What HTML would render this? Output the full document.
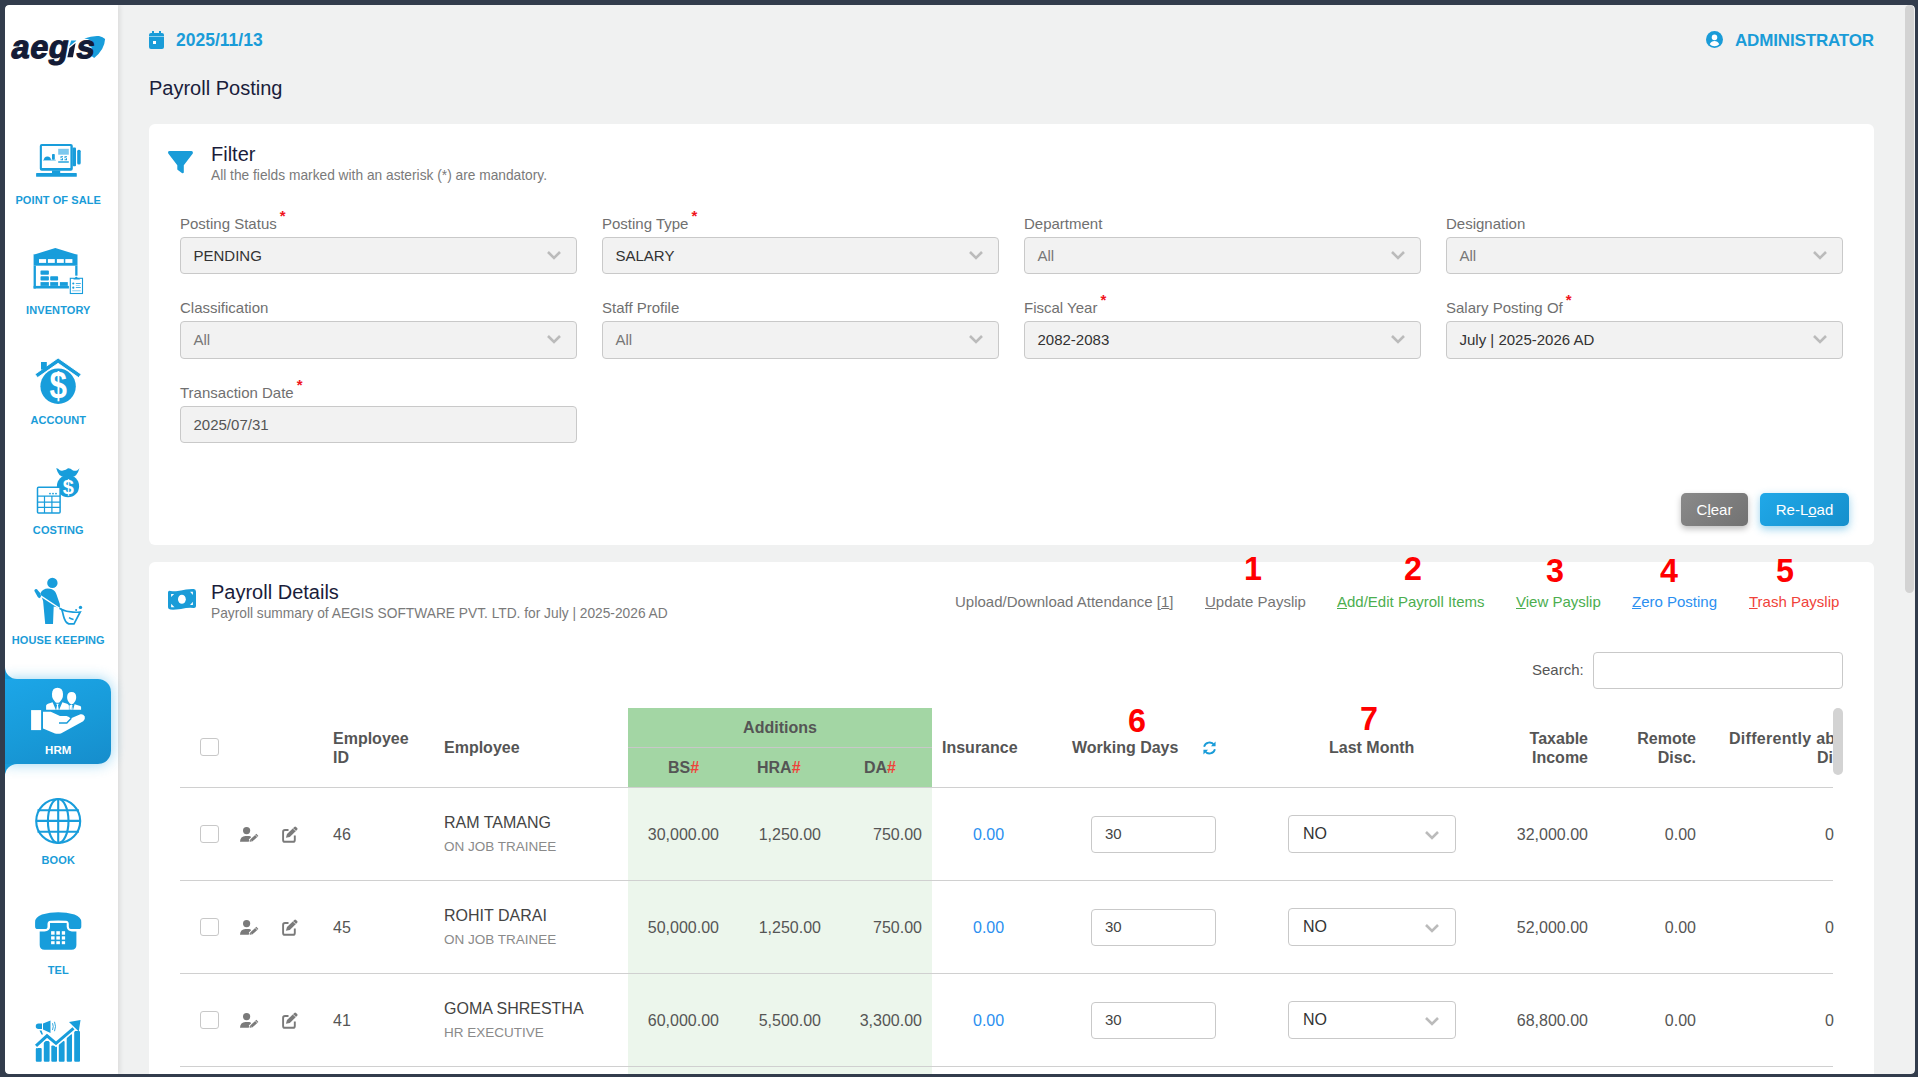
<!DOCTYPE html>
<html><head><meta charset="utf-8">
<style>
*{box-sizing:border-box;margin:0;padding:0}
html,body{width:1918px;height:1077px;overflow:hidden;background:#323c4c;font-family:"Liberation Sans",sans-serif}
#frame{position:absolute;left:5px;top:5px;width:1910px;height:1069px;background:#f0f1f1;border-radius:4px}
#side{position:absolute;left:5px;top:5px;width:113px;height:1069px;background:#fff;border-radius:4px 0 0 4px;box-shadow:2px 0 5px rgba(0,0,0,.09)}
.abs{position:absolute}
.blue{color:#1a9cd8}
.slbl{position:absolute;left:5px;width:106.5px;text-align:center;font-size:11px;font-weight:bold;color:#1a9cd8;letter-spacing:.1px}
.card{position:absolute;left:149px;width:1725px;background:#fff;border-radius:6px}
.lbl{position:absolute;font-size:15px;color:#707070;margin-top:1px}
.req{color:#f0141c;font-size:15px;font-weight:bold;position:relative;top:-8px;left:3px}
.sel{position:absolute;width:397px;height:37px;background:#f2f2f2;border:1px solid #c9c9c9;border-radius:4px;font-size:15px;color:#333;padding-left:12.5px;line-height:35px}
.sel.g{color:#777}
.chev{position:absolute;right:14px;top:12px;width:16px;height:10px}
.num{position:absolute;font-size:34px;font-weight:bold;color:#f00;line-height:1;transform:scaleX(.95);transform-origin:0 0}
.act{position:absolute;font-size:15px;top:593px}
.th{position:absolute;font-size:16px;font-weight:bold;color:#555;line-height:19px}
.td{position:absolute;font-size:16px;color:#555}
.hl{position:absolute;left:180px;width:1653px;height:1px;background:#d0d0d0}
.cb{position:absolute;left:200px;width:18.5px;height:18px;border:1px solid #c8c8c8;border-radius:3px;background:#fff}
.inp{position:absolute;left:1086px;width:125px;height:37px;border:1px solid #c9c9c9;border-radius:4px;background:#fff;font-size:15px;color:#444;padding-left:13px;line-height:33px}
.nos{position:absolute;left:1283px;width:168px;height:38px;border:1px solid #c9c9c9;border-radius:4px;background:#fff;font-size:16px;color:#333;padding-left:14px;line-height:36px}
</style></head><body>
<div id="frame"></div>
  <div id="side"></div>
  <div class="abs" style="left:5px;top:660px;width:20px;height:125px;background:#189ddb"></div>
  <div class="abs" style="left:5px;top:560px;width:113px;height:119px;background:#fff;border-bottom-left-radius:12px"></div>
  <div class="abs" style="left:5px;top:764px;width:113px;height:60px;background:#fff;border-top-left-radius:12px"></div>
  <div class="abs" style="left:5px;top:679px;width:106px;height:85px;background:linear-gradient(160deg,#1ca6e8 0%,#189ad8 55%,#168dcc 100%);border-radius:0 13px 13px 0;box-shadow:0 0 14px rgba(26,160,225,.45)"></div>
  <!-- header -->
  <svg class="abs" style="left:149px;top:31px" width="15" height="18" viewBox="0 0 15 18"><rect x="3" y="0" width="2" height="4" fill="#1a9cd8"/><rect x="10" y="0" width="2" height="4" fill="#1a9cd8"/><rect x="0" y="2" width="15" height="16" rx="2" fill="#1a9cd8"/><rect x="0" y="5" width="15" height="1" fill="#8fd0ee"/><rect x="4" y="10" width="3" height="3" fill="#fff"/></svg>
  <div class="abs blue" style="left:176px;top:30px;font-size:17.5px;font-weight:bold">2025/11/13</div>
  <div class="abs" style="left:149px;top:77px;font-size:20px;color:#1a1d3b">Payroll Posting</div>
  <svg class="abs" style="left:1706px;top:31px" width="17" height="17" viewBox="0 0 16 16"><circle cx="8" cy="8" r="8" fill="#1a9cd8"/><circle cx="8" cy="6" r="2.6" fill="#fff"/><path d="M3.5 12.5c1-2 2.6-3 4.5-3s3.5 1 4.5 3A6.2 6.2 0 0 1 8 14.3a6.2 6.2 0 0 1-4.5-1.8z" fill="#fff"/></svg>
  <div class="abs blue" style="left:1735px;top:31px;font-size:17px;font-weight:bold;letter-spacing:-0.16px">ADMINISTRATOR</div>

  <!-- filter card -->
  <div class="card" style="top:124px;height:421px"></div>
  <div class="card" style="top:562px;height:520px"></div>

  <!-- filter content -->
  <svg class="abs" style="left:167px;top:151px" width="27" height="23" viewBox="-1 0 27 23"><path d="M1.5 0H23.5Q25.6 0.4 24.8 2.4L15.8 14.3V21.4Q15.6 22.3 14.2 22.2L9.5 18.8Q9.2 18.5 9.3 17.8V14.3L0.3 2.4Q-0.6 0.4 1.5 0z" fill="#1a9cd8"/></svg>
  <div class="abs" style="left:211px;top:143px;font-size:20px;color:#1a1d3b">Filter</div>
  <div class="abs" style="left:211px;top:168px;font-size:13.75px;color:#7a7a7a">All the fields marked with an asterisk (*) are mandatory.</div>
  <div class="lbl" style="left:180px;top:214px">Posting Status<span class="req">*</span></div>
  <div class="sel" style="left:180px;top:237px">PENDING<svg class="chev" viewBox="0 0 16 10"><path d="M2 2l6 6 6-6" fill="none" stroke="#bbbbbb" stroke-width="2.6"/></svg></div>
  <div class="lbl" style="left:602px;top:214px">Posting Type<span class="req">*</span></div>
  <div class="sel" style="left:602px;top:237px">SALARY<svg class="chev" viewBox="0 0 16 10"><path d="M2 2l6 6 6-6" fill="none" stroke="#bbbbbb" stroke-width="2.6"/></svg></div>
  <div class="lbl" style="left:1024px;top:214px">Department</div>
  <div class="sel g" style="left:1024px;top:237px">All<svg class="chev" viewBox="0 0 16 10"><path d="M2 2l6 6 6-6" fill="none" stroke="#bbbbbb" stroke-width="2.6"/></svg></div>
  <div class="lbl" style="left:1446px;top:214px">Designation</div>
  <div class="sel g" style="left:1446px;top:237px">All<svg class="chev" viewBox="0 0 16 10"><path d="M2 2l6 6 6-6" fill="none" stroke="#bbbbbb" stroke-width="2.6"/></svg></div>
  <div class="lbl" style="left:180px;top:298px">Classification</div>
  <div class="sel g" style="left:180px;top:321px;height:38px;line-height:36px">All<svg class="chev" viewBox="0 0 16 10"><path d="M2 2l6 6 6-6" fill="none" stroke="#bbbbbb" stroke-width="2.6"/></svg></div>
  <div class="lbl" style="left:602px;top:298px">Staff Profile</div>
  <div class="sel g" style="left:602px;top:321px;height:38px;line-height:36px">All<svg class="chev" viewBox="0 0 16 10"><path d="M2 2l6 6 6-6" fill="none" stroke="#bbbbbb" stroke-width="2.6"/></svg></div>
  <div class="lbl" style="left:1024px;top:298px">Fiscal Year<span class="req">*</span></div>
  <div class="sel" style="left:1024px;top:321px;height:38px;line-height:36px">2082-2083<svg class="chev" viewBox="0 0 16 10"><path d="M2 2l6 6 6-6" fill="none" stroke="#bbbbbb" stroke-width="2.6"/></svg></div>
  <div class="lbl" style="left:1446px;top:298px">Salary Posting Of<span class="req">*</span></div>
  <div class="sel" style="left:1446px;top:321px;height:38px;line-height:36px">July | 2025-2026 AD<svg class="chev" viewBox="0 0 16 10"><path d="M2 2l6 6 6-6" fill="none" stroke="#bbbbbb" stroke-width="2.6"/></svg></div>
  <div class="lbl" style="left:180px;top:383px">Transaction Date<span class="req">*</span></div>
  <div class="sel" style="left:180px;top:406px;color:#555">2025/07/31</div>
  <div class="abs" style="left:1681px;top:493px;width:67px;height:33px;border-radius:5px;background:linear-gradient(135deg,#8a8a8a,#727272);color:#fff;font-size:15px;text-align:center;line-height:33px;box-shadow:0 3px 6px rgba(0,0,0,.25)">C<u>l</u>ear</div>
  <div class="abs" style="left:1760px;top:493px;width:89px;height:33px;border-radius:5px;background:linear-gradient(135deg,#20a8e8,#158fcc);color:#fff;font-size:15px;text-align:center;line-height:33px;box-shadow:0 3px 8px rgba(26,156,216,.45)">Re-L<u>o</u>ad</div>

  <!-- sidebar -->
  <svg class="abs" style="left:5px;top:25px" width="110" height="45" viewBox="5 25 110 45">
    <path d="M84.3 38.5Q92 35.5 99 36Q103 36.8 105.1 39.1Q104.5 50 94.2 57.9L90.9 55.4Q92.5 51 91.8 47.5L90 47Q92.5 45 92.4 42Q91 39.5 84.3 38.5z" fill="#189ddb"/>
    <g transform="translate(10 58) skewX(-10)" fill="#131b36" stroke="#131b36" stroke-width="1.2" font-family="Liberation Sans" font-weight="bold" font-size="32.5">
      <text x="0" y="0" letter-spacing="0.6">aeg</text>
    </g>
    <g transform="translate(10 58) skewX(-10)" fill="#131b36" stroke="#fff" stroke-width="0.8" font-family="Liberation Sans" font-weight="bold" font-size="32.5">
      <text x="65" y="0" stroke="#131b36" stroke-width="1.2">s</text>
    </g>
    <path d="M69.5 48.1L75.6 43L72.9 57.3H67.3z" fill="#131b36"/>
    <path d="M71.2 40.4H76.3L76 41L69.2 46.5z" fill="#189ddb"/>
  </svg>
  <svg class="abs" style="left:30px;top:138px" width="60" height="44" viewBox="0 0 60 44" fill="#189ddb">
    <path fill-rule="evenodd" d="M11.8 5.9h29a2 2 0 0 1 2 2v22.8a2 2 0 0 1-2 2h-29a2 2 0 0 1-2-2V7.9a2 2 0 0 1 2-2zM11.9 8v22.1h28.5V8z"/>
    <rect x="22" y="32.5" width="8.2" height="3"/>
    <rect x="6.1" y="35.1" width="40.7" height="3.7" rx="0.6"/>
    <rect x="42.6" y="9.4" width="3.4" height="18.8" rx="1"/>
    <rect x="47.2" y="11.8" width="3.5" height="14.7" rx="1.5"/>
    <path d="M13.9 22a3.5 3.5 0 0 1 7 0z"/><rect x="13" y="21.8" width="12.8" height="0.6"/>
    <rect x="22" y="16" width="2.8" height="5.7" rx=".8"/>
    <rect x="28.2" y="10.8" width="10.6" height="5.9" fill="#7cc8ee"/>
    <path d="M30.5 18.2h2.5v1h-1.5v1h1.5v2h-2.5v-1h1.5v-1h-1.5zM34.5 18.2h2.5v1h-1.5v1h1.5v2h-2.5v-1h1.5v-1h-1.5z"/>
    <rect x="28.2" y="23.3" width="10.6" height="1.4"/>
  </svg>
  <div class="slbl" style="top:194px">POINT OF SALE</div>
  <svg class="abs" style="left:28px;top:243px" width="60" height="55" viewBox="0 0 60 55" fill="#189ddb">
    <path d="M4.8 11.9L27.3 5L50 11.9z"/>
    <rect x="5.6" y="11.7" width="43.9" height="11"/>
    <g fill="#fff"><rect x="11" y="16.1" width="7.1" height="3.8"/><rect x="19.9" y="16.1" width="6.9" height="3.8"/><rect x="28.9" y="16.1" width="6.9" height="3.8"/><rect x="37.3" y="16.1" width="7.1" height="3.8"/></g>
    <rect x="5.6" y="22.7" width="2.3" height="22.8"/>
    <rect x="47.2" y="22.7" width="2.3" height="10"/>
    <rect x="5.6" y="42.9" width="35.3" height="2.6"/>
    <rect x="12.5" y="27.6" width="8.4" height="4.1" rx=".8"/><rect x="12.5" y="33.2" width="8.4" height="4.3" rx=".8"/><rect x="22.2" y="33.2" width="7.9" height="4.3" rx=".8"/>
    <rect x="12.5" y="39.1" width="8.4" height="3.8"/><rect x="22.2" y="39.1" width="7.9" height="3.8"/><rect x="31.9" y="39.1" width="7.9" height="3.8"/>
    <rect x="42.3" y="35.3" width="12.2" height="15.2" fill="#fff" stroke="#189ddb" stroke-width="1.1"/>
    <path d="M45.5 36.5h6.5l-1-1.5h-1.5a1.2 1.2 0 0 0-2.4 0h-1.5z"/>
    <circle cx="45.3" cy="40.5" r="1.1"/><circle cx="45.3" cy="44.7" r="1.1"/>
    <rect x="47.8" y="40" width="5" height=".8"/><rect x="47.8" y="42.2" width="4" height=".8" fill="#8fd0ef"/><rect x="47.8" y="44.2" width="5" height=".8"/><rect x="44.2" y="47.2" width="8.5" height="1.1" fill="#8fd0ef"/>
  </svg>
  <div class="slbl" style="top:304px">INVENTORY</div>
  <svg class="abs" style="left:30px;top:354px" width="56" height="54" viewBox="0 0 56 54" fill="#189ddb">
    <circle cx="28.1" cy="32.2" r="17.7"/>
    <path d="M5 20.2L28.1 4L51.2 20.2L48.6 23.6L28.1 9.3L7.6 23.6z" stroke="#fff" stroke-width="0.9"/>
    <rect x="11" y="8" width="5.8" height="7.6"/>
    <text x="0" y="0" transform="translate(28.2 44.3) scale(0.95 1.1)" font-family="Liberation Sans" font-weight="bold" font-size="33" fill="#fff" text-anchor="middle">$</text>
  </svg>
  <div class="slbl" style="top:414px">ACCOUNT</div>
  <svg class="abs" style="left:30px;top:462px" width="56" height="56" viewBox="0 0 56 56" fill="#189ddb">
    <path d="M26.2 6.3Q28 6 29.5 8Q31 9.2 33 8.5Q36 8 38 6.3Q40 6 43 8.5Q45 9.3 47.5 8.3L49.5 6.2Q48.5 10 46 13.2L44 14.5H32L29.5 13Q27 9.5 26.2 6.3z"/>
    <circle cx="38" cy="24.2" r="11.1"/>
    <text x="38.3" y="32.2" font-family="Liberation Sans" font-weight="bold" font-size="20" fill="#fff" text-anchor="middle">$</text>
    <rect x="7.5" y="25.3" width="22.6" height="25.8" rx="1" fill="#fff" stroke="#189ddb" stroke-width="1.5"/>
    <path d="M7.5 34.2h22.6M7.5 40.2h22.6M7.5 45.4h22.6M14.5 34.2v16.9M21.9 34.2v16.9" stroke="#189ddb" stroke-width="1.2" fill="none"/>
    <circle cx="20" cy="31.6" r=".9"/><circle cx="23" cy="31.6" r=".9"/><circle cx="26" cy="31.6" r=".9"/>
  </svg>
  <div class="slbl" style="top:524px">COSTING</div>
  <svg class="abs" style="left:28px;top:572px" width="60" height="56" viewBox="0 0 60 56" fill="#189ddb">
    <circle cx="24.4" cy="10.9" r="5.2"/>
    <path d="M12.4 21.2Q15 16.6 19.8 16.6Q24.5 16.6 27 19.5Q28 21 28.5 22.5L31.8 32L32 36L25.7 34.5L25 52H17.2L15.1 29.1z"/>
    <path d="M6.3 18.7Q6.6 16.8 8.3 17Q9.3 17.3 10 18.5L12.4 21.2L13.2 24.8L11.3 26.2Q10.2 25.8 9.6 24.8z"/>
    <path d="M13 24.1L34.5 38.2" stroke="#fff" stroke-width="1.3"/>
    <path d="M15 28.6L25.7 36" stroke="#189ddb" stroke-width="0.1"/>
    <path d="M31.5 36.2L35 38.4" stroke="#189ddb" stroke-width="1.6"/>
    <path d="M33.8 37.6Q38 39.8 45 40.2Q49 40.4 52.2 40L46 51.9H40.8Q37 50.5 35.5 44Q34.8 41 33.8 37.6z" fill="none" stroke="#189ddb" stroke-width="1.7"/>
    <path d="M41 45.6Q43 47 45.6 47.5" fill="none" stroke="#189ddb" stroke-width="1.3"/>
    <circle cx="52.5" cy="35.4" r="1.7"/><circle cx="48.1" cy="38" r="1"/>
  </svg>
  <div class="slbl" style="top:634px">HOUSE KEEPING</div>

  <svg class="abs" style="left:0;top:650px" width="125" height="140" viewBox="0 0 125 140" fill="#fff">
    <rect x="31.1" y="60.1" width="10" height="20"/>
    <path d="M43 61.8H50.8L60 65.9H66.5Q69.5 66.5 70.5 68.4L80.4 64.3Q83 63.5 84.8 66.5Q85.5 69.5 83.2 71.2L60.9 83.4Q58 84.2 55 83.6L43 78.5z"/>
    <path d="M59 72.9H66.8L71.3 68.3" fill="none" stroke="#189cd9" stroke-width="1.5"/>
    <path d="M57.5 37.8Q62.8 37.8 63 44Q63.2 46.5 62 49L59.6 52.2Q57.5 53.5 55.4 52.2L53 49Q51.8 46.5 52 44Q52.2 37.8 57.5 37.8z"/>
    <path d="M46.1 59.8V55.5Q46.5 54.2 48 53.7L52.6 52.2L55.8 59.8zM56.2 59.8L57 55.2L56.1 53.7H58.9L58 55.2L58.8 59.8zM59.2 59.8L62.4 52.2L67 53.7Q68.5 54.2 68.9 55.5V59.8z"/>
    <path d="M71.6 42Q76 42 76.2 47Q76.3 49 75.3 51L73.5 53.5Q71.6 54.5 69.8 53.5L68 51Q67 49 67.1 47Q67.3 42 71.6 42z"/>
    <path d="M69.4 59.8V55.6L72 54.2L70.7 59.8zM71.1 59.8L71.6 55.8L71 54.9H72.8L72.2 55.8L72.7 59.8zM73.1 59.8L74.6 54.2L80.2 56Q81 56.5 81.1 57.3V59.8z"/>
  </svg>
  <div class="slbl" style="top:744px;color:#fff;font-size:11.5px">HRM</div>
  <svg class="abs" style="left:30px;top:792px" width="56" height="56" viewBox="0 0 56 56" fill="none" stroke="#189ddb" stroke-width="2.1">
    <circle cx="28.2" cy="29" r="22"/>
    <ellipse cx="28.2" cy="29" rx="10.3" ry="22"/>
    <path d="M28.2 7v44M7.5 18.2h41.4M6.2 28.9h44M7.5 39.8h41.4"/>
  </svg>
  <div class="slbl" style="top:854px">BOOK</div>
  <svg class="abs" style="left:30px;top:905px" width="56" height="50" viewBox="0 0 56 50" fill="#189ddb">
    <path d="M5.1 17Q5.1 12 12 9.5Q20 7.2 28.2 7.2Q36.5 7.2 44.5 9.5Q51.3 12 51.3 17L51.3 21.5Q51.3 24.1 48.5 24.1L40.8 24.1Q38.8 24.1 38.8 21.5L38.8 19Q38.8 16 36 15.8Q32 15.4 28.2 15.4Q24 15.4 20.5 15.8Q17.5 16 17.5 19L17.5 21.5Q17.5 24.1 15 24.1L7.8 24.1Q5.1 24.1 5.1 21.5z"/>
    <path d="M20 17.9L36.7 17.9L36.7 22Q37.5 26.4 42 26.4L46.4 26.4L46.4 40Q46.4 44.8 41.5 44.8L14.6 44.8Q9.7 44.8 9.7 40L9.7 26.4L14.5 26.4Q20 26 20 22z"/>
    <g fill="#fff"><rect x="21.1" y="26.2" width="3.5" height="3.5"/><rect x="26.3" y="26.2" width="3.6" height="3.5"/><rect x="31.8" y="26.2" width="3.3" height="3.5"/>
    <rect x="21.1" y="31.3" width="3.5" height="3.3"/><rect x="26.3" y="31.3" width="3.6" height="3.3"/><rect x="31.8" y="31.3" width="3.3" height="3.3"/>
    <rect x="21.1" y="36.2" width="3.5" height="3"/><rect x="26.3" y="36.2" width="3.6" height="3"/><rect x="31.8" y="36.2" width="3.3" height="3"/></g>
  </svg>
  <div class="slbl" style="top:964px">TEL</div>
  <svg class="abs" style="left:30px;top:1015px" width="56" height="50" viewBox="30 1015 56 50" fill="#189ddb">
    <rect x="35.8" y="1047.9" width="5.9" height="13.8" rx="1"/>
    <rect x="43.8" y="1041" width="5.8" height="20.7" rx="1"/>
    <rect x="51.3" y="1045.4" width="5.7" height="16.3" rx="1"/>
    <rect x="58.8" y="1041" width="5.8" height="20.7" rx="1"/>
    <rect x="66.7" y="1034" width="5.3" height="27.7" rx="1"/>
    <rect x="74.2" y="1031" width="5.8" height="30.7" rx="1"/>
    <path d="M35.5 1046.5L47 1036.5L56 1044L73.5 1029" fill="none" stroke="#fff" stroke-width="5"/>
    <path d="M36 1045.8L47 1035.8L56 1043.3L73.5 1028.3" fill="none" stroke="#189ddb" stroke-width="3"/>
    <path d="M69 1022L80.5 1020L78.8 1031.5z"/>
    <path d="M38.5 1023.5h3.5v5.5h-3.5a2.75 2.75 0 0 1 0-5.5zM43 1023.5L50.5 1020.5V1033L43 1029.5z"/>
    <path d="M52.5 1023.2Q54 1026.5 52.5 1030M54.5 1021.8Q56.5 1026.5 54.5 1031.2" fill="none" stroke="#189ddb" stroke-width=".9"/>
    <path d="M39.5 1030.5L41.5 1034.5H43L41.5 1030.5z"/>
  </svg>


  <!-- payroll details -->
  <svg class="abs" style="left:160px;top:580px" width="45" height="40" viewBox="0 0 45 40"><path d="M8 12.3Q8.3 10.6 10.5 10.9Q13 11.4 16 11.3Q21 10.9 26 9.6Q30 8.9 33.8 9.1Q36 9.4 36 11.8V26.2Q35.8 28.2 33.5 27.9Q30 27.4 26 28Q21 29 16 29.6Q13 29.9 10.3 29.6Q8 29.2 8 27.2z" fill="#1a9cd8"/><ellipse cx="21.9" cy="19.3" rx="3.9" ry="4.5" fill="#fff"/><g fill="#fff"><path d="M11.1 13.9h3l-3 3.2z"/><path d="M30.1 11.7h2.8v3.2z"/><path d="M11.1 23.8l3.4 3.5h-3.4z"/><path d="M32.9 21.7v3.2h-2.8z"/></g></svg>
  <div class="abs" style="left:211px;top:581px;font-size:20px;color:#1a1d3b">Payroll Details</div>
  <div class="abs" style="left:211px;top:606px;font-size:13.75px;color:#7a7a7a">Payroll summary of AEGIS SOFTWARE PVT. LTD. for July | 2025-2026 AD</div>
  <div class="act" style="left:955px;color:#757575">Upload/Download Attendance [<u>1</u>]</div>
  <div class="act" style="left:1205px;color:#757575"><u>U</u>pdate Payslip</div>
  <div class="act" style="left:1337px;color:#4cae4f"><u>A</u>dd/Edit Payroll Items</div>
  <div class="act" style="left:1516px;color:#4cae4f"><u>V</u>iew Payslip</div>
  <div class="act" style="left:1632px;color:#2b8ff0"><u>Z</u>ero Posting</div>
  <div class="act" style="left:1749px;color:#f0423a"><u>T</u>rash Payslip</div>
  <div class="num" style="left:1244px;top:551px">1</div>
  <div class="num" style="left:1404px;top:551px">2</div>
  <div class="num" style="left:1546px;top:553px">3</div>
  <div class="num" style="left:1660px;top:553px">4</div>
  <div class="num" style="left:1776px;top:553px">5</div>
  <div class="abs" style="left:1532px;top:661px;font-size:15px;color:#555">Search:</div>
  <div class="abs" style="left:1593px;top:652px;width:250px;height:37px;border:1px solid #c9c9c9;border-radius:4px;background:#fff"></div>

  <!-- table header -->
  <div class="abs" style="left:628px;top:708px;width:304px;height:40px;background:#a3d6a4"></div>
  <div class="abs" style="left:628px;top:747px;width:304px;height:40px;background:#a3d6a4;border-top:1px solid #c8c8c8"></div>
  <div class="abs" style="left:628px;top:788px;width:304px;height:289px;background:#ecf6ec"></div>
  <div class="cb" style="top:738px"></div>
  <div class="th" style="left:333px;top:729px">Employee<br>ID</div>
  <div class="th" style="left:444px;top:738px">Employee</div>
  <div class="th" style="left:628px;top:718px;width:304px;text-align:center">Additions</div>
  <div class="th" style="left:668px;top:758px">BS<span style="color:#f0423a">#</span></div>
  <div class="th" style="left:757px;top:758px">HRA<span style="color:#f0423a">#</span></div>
  <div class="th" style="left:864px;top:758px">DA<span style="color:#f0423a">#</span></div>
  <div class="th" style="left:942px;top:738px">Insurance</div>
  <div class="th" style="left:1072px;top:738px">Working Days</div>
  <svg class="abs" style="left:1202px;top:741px" width="15" height="14" viewBox="0 0 16 15"><path d="M2.2 6.2A6 6 0 0 1 13 4.2M13.8 8.8A6 6 0 0 1 3 10.8" fill="none" stroke="#1a9cd8" stroke-width="2"/><path d="M14.5 0.5v5h-5z M1.5 14.5v-5h5z" fill="#1a9cd8"/></svg>
  <div class="num" style="left:1127.5px;top:703px">6</div>
  <div class="num" style="left:1359.5px;top:701px">7</div>
  <div class="th" style="left:1329px;top:738px">Last Month</div>
  <div class="th" style="left:1488px;top:729px;width:100px;text-align:right">Taxable<br>Income</div>
  <div class="th" style="left:1596px;top:729px;width:100px;text-align:right">Remote<br>Disc.</div>
  <div class="abs" style="left:1700px;top:729px;width:133px;height:40px;overflow:hidden"><div class="th" style="left:29px;top:0;white-space:nowrap;letter-spacing:.3px">Differently abled</div><div class="th" style="left:117px;top:19px;white-space:nowrap">Disc.</div></div>
  <div class="abs" style="left:1833px;top:708px;width:10px;height:67px;border-radius:5px;background:#d3d3d3"></div>
  <div class="hl" style="top:787px"></div>
  <div class="cb" style="top:825px"></div>
  <svg class="abs" style="left:240px;top:827px" width="20" height="15" viewBox="0 0 20 15"><circle cx="6.6" cy="3.6" r="3.6" fill="#7a7a7a"/><path d="M0 14.8Q0.3 9.3 5.5 9.1H9.3Q10.8 9.3 11.3 10.2L8.6 14.8z" fill="#7a7a7a"/><path d="M10.3 14.2L17.4 7.7" stroke="#fff" stroke-width="4.6"/><path d="M11.2 13.5L17.4 7.9" stroke="#7a7a7a" stroke-width="3"/><path d="M9.6 14.8l.5-2.2 1.8 1.9z" fill="#7a7a7a"/><path d="M15.5 8l1.9 2" stroke="#fff" stroke-width=".7"/></svg>
  <svg class="abs" style="left:281px;top:826px" width="18" height="17" viewBox="0 0 18 17"><path d="M7.5 4H4Q2.1 4 2.1 5.9V13.9Q2.1 15.8 4 15.8H11.9Q13.8 15.8 13.8 13.9V9.5" fill="none" stroke="#7a7a7a" stroke-width="1.9"/><path d="M4.9 11.8L6 8.1L13.3 0.9Q14.2 0.2 15 0.9L16.2 2.1Q16.9 2.9 16.2 3.8L8.8 11z" fill="#7a7a7a"/><path d="M12 2.3l2.6 2.6" stroke="#fff" stroke-width=".8"/></svg>
  <div class="td" style="left:333px;top:826px">46</div>
  <div class="td" style="left:444px;top:814px;color:#444">RAM TAMANG</div>
  <div class="td" style="left:444px;top:839px;font-size:13.5px;color:#8a8a8a">ON JOB TRAINEE</div>
  <div class="td" style="left:600px;top:826px;width:119px;text-align:right">30,000.00</div>
  <div class="td" style="left:700px;top:826px;width:121px;text-align:right">1,250.00</div>
  <div class="td" style="left:800px;top:826px;width:122px;text-align:right">750.00</div>
  <div class="td" style="left:973px;top:826px;color:#2b8ff0">0.00</div>
  <div class="inp" style="left:1091px;top:816px">30</div>
  <div class="nos" style="left:1288px;top:815px">NO<svg class="chev" style="right:15px;top:14px" viewBox="0 0 16 10"><path d="M2 2l6 6 6-6" fill="none" stroke="#bbbbbb" stroke-width="2.6"/></svg></div>
  <div class="td" style="left:1480px;top:826px;width:108px;text-align:right">32,000.00</div>
  <div class="td" style="left:1600px;top:826px;width:96px;text-align:right">0.00</div>
  <div class="td" style="left:1800px;top:826px;width:34px;text-align:right">0</div>
  <div class="hl" style="top:880px"></div>
  <div class="cb" style="top:918px"></div>
  <svg class="abs" style="left:240px;top:920px" width="20" height="15" viewBox="0 0 20 15"><circle cx="6.6" cy="3.6" r="3.6" fill="#7a7a7a"/><path d="M0 14.8Q0.3 9.3 5.5 9.1H9.3Q10.8 9.3 11.3 10.2L8.6 14.8z" fill="#7a7a7a"/><path d="M10.3 14.2L17.4 7.7" stroke="#fff" stroke-width="4.6"/><path d="M11.2 13.5L17.4 7.9" stroke="#7a7a7a" stroke-width="3"/><path d="M9.6 14.8l.5-2.2 1.8 1.9z" fill="#7a7a7a"/><path d="M15.5 8l1.9 2" stroke="#fff" stroke-width=".7"/></svg>
  <svg class="abs" style="left:281px;top:919px" width="18" height="17" viewBox="0 0 18 17"><path d="M7.5 4H4Q2.1 4 2.1 5.9V13.9Q2.1 15.8 4 15.8H11.9Q13.8 15.8 13.8 13.9V9.5" fill="none" stroke="#7a7a7a" stroke-width="1.9"/><path d="M4.9 11.8L6 8.1L13.3 0.9Q14.2 0.2 15 0.9L16.2 2.1Q16.9 2.9 16.2 3.8L8.8 11z" fill="#7a7a7a"/><path d="M12 2.3l2.6 2.6" stroke="#fff" stroke-width=".8"/></svg>
  <div class="td" style="left:333px;top:919px">45</div>
  <div class="td" style="left:444px;top:907px;color:#444">ROHIT DARAI</div>
  <div class="td" style="left:444px;top:932px;font-size:13.5px;color:#8a8a8a">ON JOB TRAINEE</div>
  <div class="td" style="left:600px;top:919px;width:119px;text-align:right">50,000.00</div>
  <div class="td" style="left:700px;top:919px;width:121px;text-align:right">1,250.00</div>
  <div class="td" style="left:800px;top:919px;width:122px;text-align:right">750.00</div>
  <div class="td" style="left:973px;top:919px;color:#2b8ff0">0.00</div>
  <div class="inp" style="left:1091px;top:909px">30</div>
  <div class="nos" style="left:1288px;top:908px">NO<svg class="chev" style="right:15px;top:14px" viewBox="0 0 16 10"><path d="M2 2l6 6 6-6" fill="none" stroke="#bbbbbb" stroke-width="2.6"/></svg></div>
  <div class="td" style="left:1480px;top:919px;width:108px;text-align:right">52,000.00</div>
  <div class="td" style="left:1600px;top:919px;width:96px;text-align:right">0.00</div>
  <div class="td" style="left:1800px;top:919px;width:34px;text-align:right">0</div>
  <div class="hl" style="top:973px"></div>
  <div class="cb" style="top:1011px"></div>
  <svg class="abs" style="left:240px;top:1013px" width="20" height="15" viewBox="0 0 20 15"><circle cx="6.6" cy="3.6" r="3.6" fill="#7a7a7a"/><path d="M0 14.8Q0.3 9.3 5.5 9.1H9.3Q10.8 9.3 11.3 10.2L8.6 14.8z" fill="#7a7a7a"/><path d="M10.3 14.2L17.4 7.7" stroke="#fff" stroke-width="4.6"/><path d="M11.2 13.5L17.4 7.9" stroke="#7a7a7a" stroke-width="3"/><path d="M9.6 14.8l.5-2.2 1.8 1.9z" fill="#7a7a7a"/><path d="M15.5 8l1.9 2" stroke="#fff" stroke-width=".7"/></svg>
  <svg class="abs" style="left:281px;top:1012px" width="18" height="17" viewBox="0 0 18 17"><path d="M7.5 4H4Q2.1 4 2.1 5.9V13.9Q2.1 15.8 4 15.8H11.9Q13.8 15.8 13.8 13.9V9.5" fill="none" stroke="#7a7a7a" stroke-width="1.9"/><path d="M4.9 11.8L6 8.1L13.3 0.9Q14.2 0.2 15 0.9L16.2 2.1Q16.9 2.9 16.2 3.8L8.8 11z" fill="#7a7a7a"/><path d="M12 2.3l2.6 2.6" stroke="#fff" stroke-width=".8"/></svg>
  <div class="td" style="left:333px;top:1012px">41</div>
  <div class="td" style="left:444px;top:1000px;color:#444">GOMA SHRESTHA</div>
  <div class="td" style="left:444px;top:1025px;font-size:13.5px;color:#8a8a8a">HR EXECUTIVE</div>
  <div class="td" style="left:600px;top:1012px;width:119px;text-align:right">60,000.00</div>
  <div class="td" style="left:700px;top:1012px;width:121px;text-align:right">5,500.00</div>
  <div class="td" style="left:800px;top:1012px;width:122px;text-align:right">3,300.00</div>
  <div class="td" style="left:973px;top:1012px;color:#2b8ff0">0.00</div>
  <div class="inp" style="left:1091px;top:1002px">30</div>
  <div class="nos" style="left:1288px;top:1001px">NO<svg class="chev" style="right:15px;top:14px" viewBox="0 0 16 10"><path d="M2 2l6 6 6-6" fill="none" stroke="#bbbbbb" stroke-width="2.6"/></svg></div>
  <div class="td" style="left:1480px;top:1012px;width:108px;text-align:right">68,800.00</div>
  <div class="td" style="left:1600px;top:1012px;width:96px;text-align:right">0.00</div>
  <div class="td" style="left:1800px;top:1012px;width:34px;text-align:right">0</div>
  <div class="hl" style="top:1066px"></div>
  <div class="abs" style="left:1905px;top:5px;width:9px;height:588px;border-radius:5px;background:#d3d3d3"></div>
  <div class="abs" style="left:5px;top:5px;width:1910px;height:1069px;border-radius:4px;box-shadow:0 0 0 12px #323c4c"></div>
</body></html>
